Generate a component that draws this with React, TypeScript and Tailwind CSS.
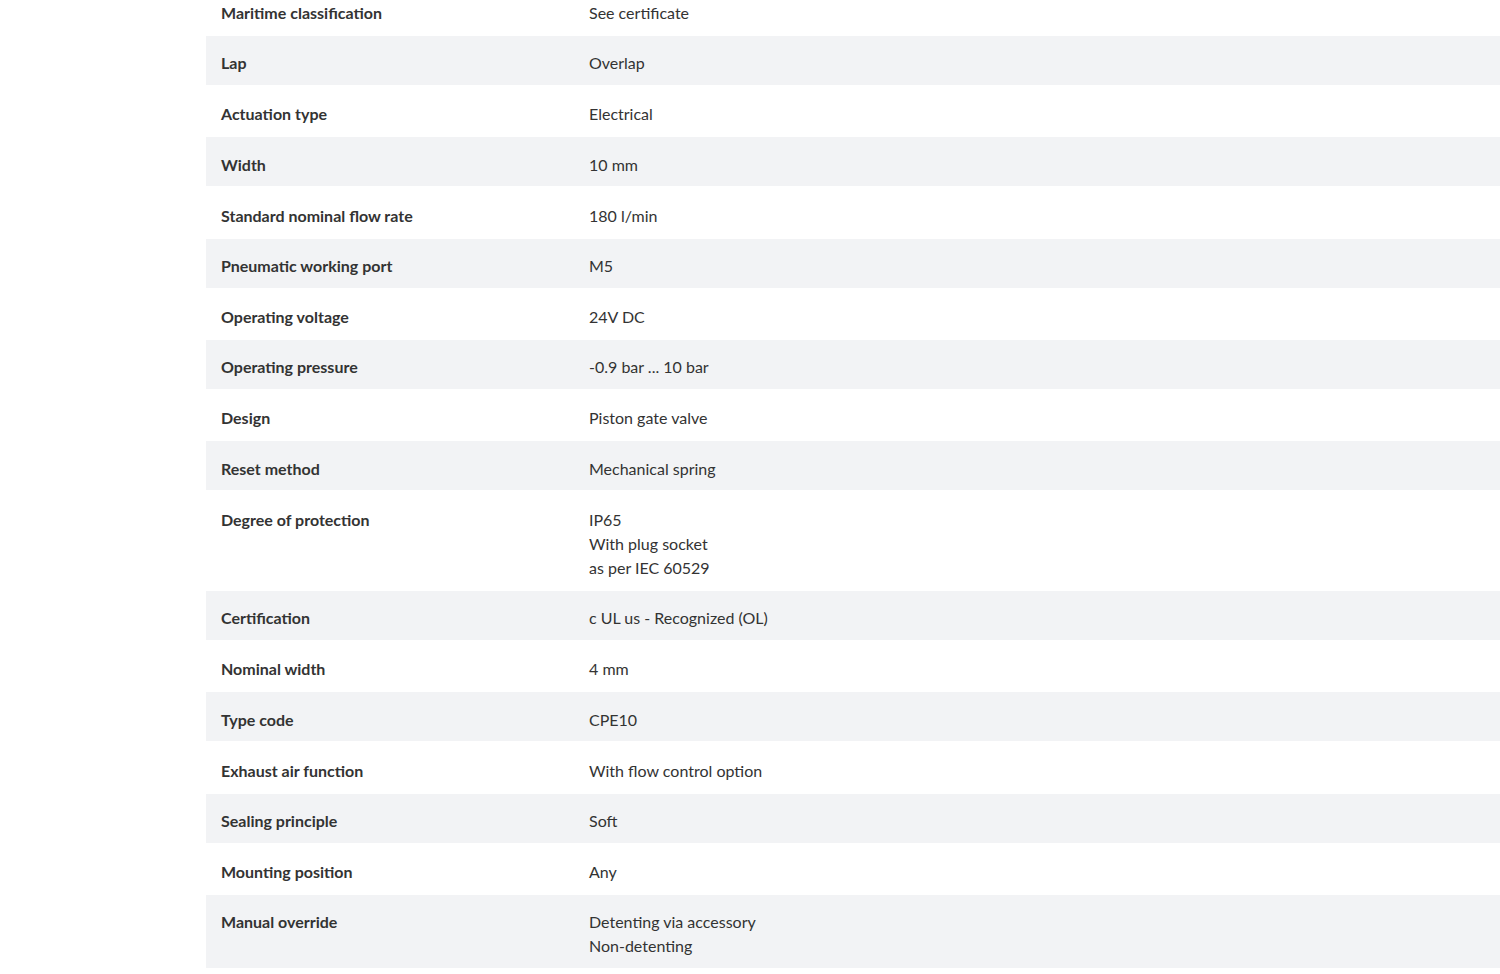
const specs: { label: string; value: string[] }[] = [
  { label: "Maritime classification", value: ["See certificate"] },
  { label: "Lap", value: ["Overlap"] },
  { label: "Actuation type", value: ["Electrical"] },
  { label: "Width", value: ["10 mm"] },
  { label: "Standard nominal flow rate", value: ["180 l/min"] },
  { label: "Pneumatic working port", value: ["M5"] },
  { label: "Operating voltage", value: ["24V DC"] },
  { label: "Operating pressure", value: ["-0.9 bar ... 10 bar"] },
  { label: "Design", value: ["Piston gate valve"] },
  { label: "Reset method", value: ["Mechanical spring"] },
  { label: "Degree of protection", value: ["IP65", "With plug socket", "as per IEC 60529"] },
  { label: "Certification", value: ["c UL us - Recognized (OL)"] },
  { label: "Nominal width", value: ["4 mm"] },
  { label: "Type code", value: ["CPE10"] },
  { label: "Exhaust air function", value: ["With flow control option"] },
  { label: "Sealing principle", value: ["Soft"] },
  { label: "Mounting position", value: ["Any"] },
  { label: "Manual override", value: ["Detenting via accessory", "Non-detenting"] },
];

export default function App() {
  return (
    <div className="min-h-[974px] overflow-hidden bg-white text-[#333] font-['Lato',sans-serif] text-[16px] leading-6">
      <div className="ml-[206px] -mt-[16.6px]">
        {specs.map((row, idx) => {
          const odd = idx % 2 === 1;
          return (
            <div
              key={row.label}
              className={`flex ${odd ? "bg-[#f2f3f5] pt-[15.5px] pb-[9.5px]" : "bg-white pt-[17.4px] pb-[11px]"}`}
            >
              <div className="w-[383px] shrink-0 pl-[15px] font-bold">{row.label}</div>
              <div className="flex-1">
                {row.value.map((v) => (
                  <div key={v}>{v}</div>
                ))}
              </div>
            </div>
          );
        })}
      </div>
    </div>
  );
}
